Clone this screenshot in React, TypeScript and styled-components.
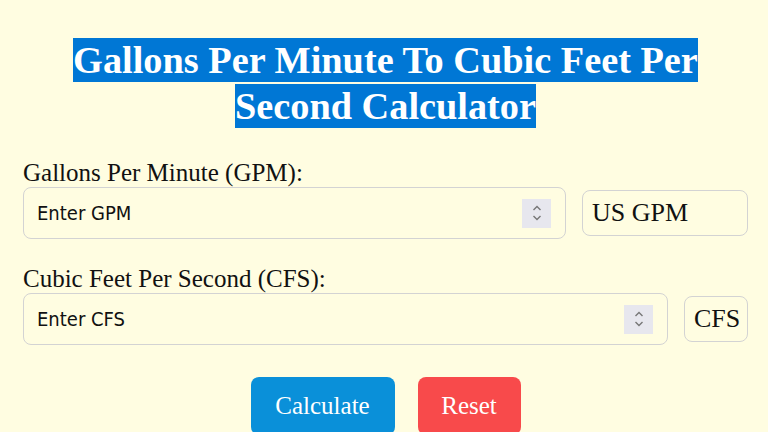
import React from "react"
import styled, { createGlobalStyle } from "styled-components"

const Global = createGlobalStyle`
  html, body {
    margin: 0;
    background: #fffde1;
  }
  body {
    font-family: "Liberation Serif", "Times New Roman", serif;
    color: #111;
  }
`

const Spinner = () => (
  <Spin>
    <svg width="12" height="20" viewBox="0 0 12 20">
      <path d="M2.5 7 L6 3.5 L9.5 7" fill="none" stroke="#777" strokeWidth="1.4" />
      <path d="M2.5 13 L6 16.5 L9.5 13" fill="none" stroke="#777" strokeWidth="1.4" />
    </svg>
  </Spin>
)

const App = () => {
  return (
    <Page>
      <Global />
      <Title>
        <Mark>Gallons Per Minute To Cubic Feet Per Second Calculator</Mark>
      </Title>

      <Field>
        <Label>Gallons Per Minute (GPM):</Label>
        <Row>
          <InputBox>
            <Input placeholder="Enter GPM" />
            <Spinner />
          </InputBox>
          <Unit width={166}>US GPM</Unit>
        </Row>
      </Field>

      <Field>
        <Label>Cubic Feet Per Second (CFS):</Label>
        <Row>
          <InputBox>
            <Input placeholder="Enter CFS" />
            <Spinner />
          </InputBox>
          <Unit width={64}>CFS</Unit>
        </Row>
      </Field>

      <Buttons>
        <Button bg="#0a90d9" width={144}>Calculate</Button>
        <Button bg="#f84a4b" width={103}>Reset</Button>
      </Buttons>
    </Page>
  )
}

export default App

const Page = styled.div`
  padding: 37px 20px 0 23px;
  height: 432px;
  box-sizing: border-box;
  overflow: hidden;
`

const Title = styled.h1`
  margin: 0 0 29px;
  text-align: center;
  font-size: 38.3px;
  line-height: 46px;
  font-weight: 700;
  padding: 0 20px;
`

const Mark = styled.span`
  background: #0077d5;
  color: #fff;
  padding: 1px 0;
`

const Field = styled.div`
  display: flex;
  flex-direction: column;
  margin-bottom: 25px;
`

const Label = styled.label`
  font-size: 25px;
  line-height: 29px;
`

const Row = styled.div`
  display: flex;
  align-items: center;
  gap: 16px;
`

const InputBox = styled.div`
  flex: 1;
  height: 52px;
  box-sizing: border-box;
  border: 1.5px solid #d3d3d3;
  border-radius: 8px;
  display: flex;
  align-items: center;
  padding: 0 14px 0 13px;
`

const Input = styled.input`
  flex: 1;
  border: none;
  outline: none;
  background: transparent;
  padding: 0;
  font-family: "DejaVu Sans Condensed", "DejaVu Sans", sans-serif;
  font-size: 20px;
  color: #111;
  &::placeholder {
    color: #111;
  }
`

const Spin = styled.div`
  width: 29px;
  height: 29px;
  background: #e7e7ee;
  display: flex;
  align-items: center;
  justify-content: center;
`

const Unit = styled.div<{ width: number }>`
  width: ${p => p.width}px;
  height: 46px;
  box-sizing: border-box;
  border: 1.5px solid #d3d3d3;
  border-radius: 8px;
  display: flex;
  align-items: center;
  padding-left: 9px;
  font-size: 26px;
`

const Buttons = styled.div`
  display: flex;
  justify-content: center;
  gap: 23px;
  margin-top: 32px;
`

const Button = styled.button<{ bg: string; width: number }>`
  background: ${p => p.bg};
  width: ${p => p.width}px;
  height: 58px;
  border: none;
  border-radius: 8px;
  color: #fff;
  font-family: "Liberation Serif", "Times New Roman", serif;
  font-size: 25px;
  padding-bottom: 2px;
`
